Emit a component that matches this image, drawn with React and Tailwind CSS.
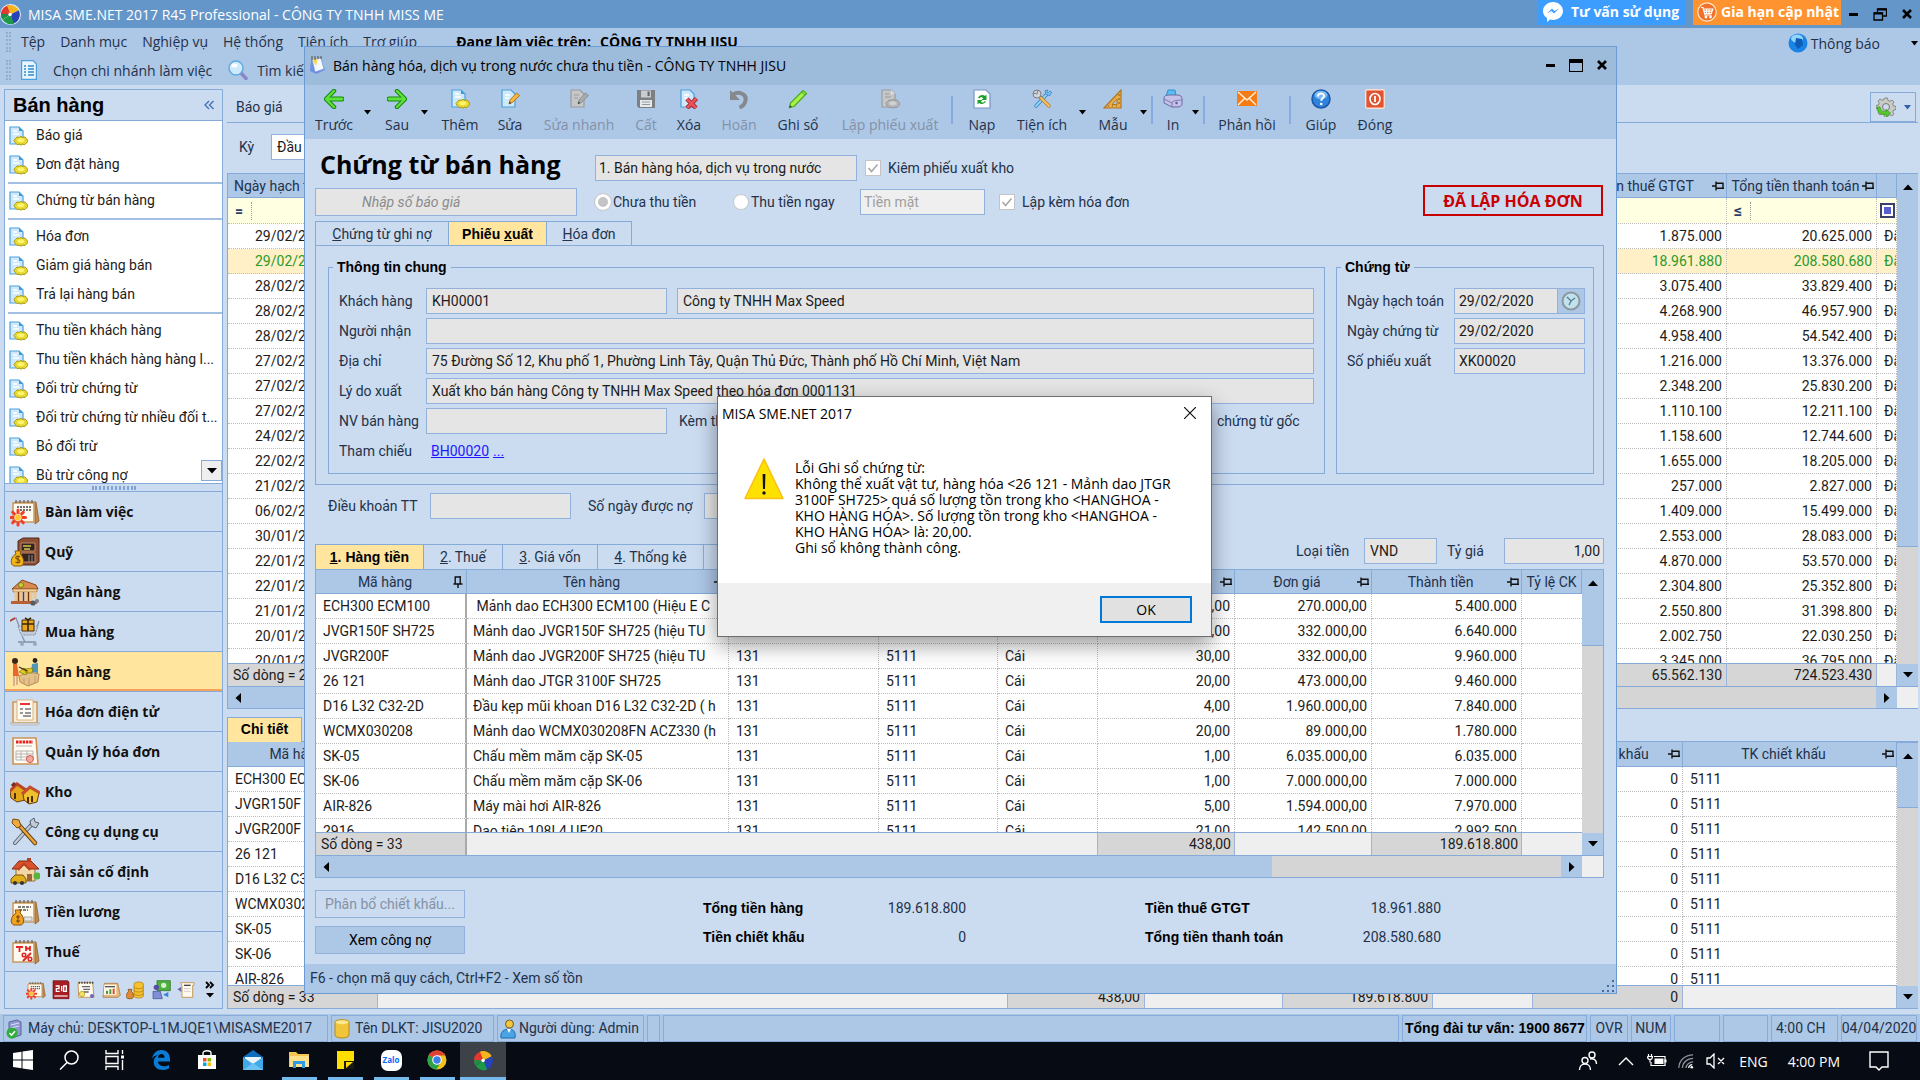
import React from "react";

const UI = "font-['Open_Sans','Noto_Sans',sans-serif]";
const GRID = "font-[Roboto,'Liberation_Sans',sans-serif]";

/* ---------- small glyphs ---------- */
const Tri = ({ dir = "down", className = "" }) => {
  const p = { down: "M0 2h10L5 7.5z", up: "M0 8h10L5 2.5z", left: "M8 0v10L2.500 5z", right: "M2 0v10L7.500 5z" };
  return (
    <svg viewBox="0 0 10 10" className={"h-[10px] w-[10px] shrink-0 fill-black " + className}>
      <path d={p[dir]} />
    </svg>
  );
};
const Pin = ({ up }) => (
  <svg viewBox="0 0 12 10" className={"h-[10px] w-[12px] shrink-0 " + (up ? "-rotate-90" : "")} fill="none" stroke="#111" strokeWidth="1.4">
    <path d="M0 5h4M4 0.500v9M4 2.200h7v5M4 7.200h8" />
  </svg>
);

const page = (fill = "#cfe8fb", stroke = "#4a9fdc") => (
  <path d="M2 1h9l4 4v13H2z" fill={fill} stroke={stroke} strokeWidth="1.200" />
);
const Doc = ({ gray, className = "h-5 w-5" }) => (
  <svg viewBox="0 0 20 20" className={"shrink-0 " + className}>
    {gray ? page("#c4c6c8", "#9a9c9e") : page()}
    <path d="M11 1v4h4" fill={gray ? "#e2e2e2" : "#3f9be0"} />
    <path d="M5 8h6M5 5h4" stroke={gray ? "#aaa" : "#fff"} strokeWidth="1.500" />
    <path
      d="M7.500 12.500l-1.500 2L7.500 17l1.500 1.500 2.500-.3 1.500 1 1.500-1 2.500.3 1.500-1.500 1.500-2-1.500-2.500-1.500-1.500-2.500.3-1.500-1-1.500 1-2.500-.3z"
      fill={gray ? "#b4b6b8" : "#e8d830"}
      stroke={gray ? "#929496" : "#a99a12"}
      strokeWidth="1"
    />
    <ellipse cx="12.800" cy="14.300" rx="3.400" ry="2" fill={gray ? "#d0d0d0" : "#fbf56e"} />
  </svg>
);
const DocEdit = ({ gray }) => (
  <svg viewBox="0 0 20 20" className="h-5 w-5">
    {gray ? page("#c4c6c8", "#9a9c9e") : page()}
    <path d="M5 6h5M5 9h4" stroke={gray ? "#aaa" : "#fff"} strokeWidth="1.500" />
    <path d="M9 15l1-4 6.500-7 3 2.500-7 7z" fill={gray ? "#a8aaac" : "#f8b63a"} stroke={gray ? "#8a8c8e" : "#a8701a"} strokeWidth="0.900" />
    <path d="M9 15l.6-2.400 1.600 1.500z" fill="#333" />
  </svg>
);
const DocDelete = () => (
  <svg viewBox="0 0 20 20" className="h-5 w-5">
    {page()}
    <path d="M5 6h5M5 9h4" stroke="#fff" strokeWidth="1.500" />
    <path d="M8 10l9 9M17.500 9.500l-9.500 9.500" stroke="#9c1f24" strokeWidth="4.400" />
    <path d="M8 10l9 9M17.500 9.500l-9.500 9.500" stroke="#e8545a" strokeWidth="2.800" />
  </svg>
);
const Arrow = ({ flip }) => (
  <svg viewBox="0 0 20 20" className={"h-5 w-5 " + (flip ? "-scale-x-100" : "")}>
    <path d="M10 2L2 10l8 8" fill="none" stroke="#168a0c" strokeWidth="4.500" strokeLinejoin="round" strokeLinecap="round" />
    <path d="M3 10h15" stroke="#168a0c" strokeWidth="5" strokeLinecap="round" />
    <path d="M10 2L2 10l8 8" fill="none" stroke="#5fe03c" strokeWidth="2.400" strokeLinejoin="round" strokeLinecap="round" />
    <path d="M3 10h15" stroke="#5fe03c" strokeWidth="2.800" strokeLinecap="round" />
  </svg>
);
const Save = () => (
  <svg viewBox="0 0 20 20" className="h-5 w-5">
    <path d="M1 1h18v18H3l-2-2z" fill="#7d8083" />
    <path d="M5 1.500h10v7H5z" fill="#c9cccf" />
    <path d="M11.500 2.500h2.200v4.500h-2.200z" fill="#66696c" />
    <path d="M4 11h12v7H4z" fill="#e6e8ea" />
    <path d="M6 13h8M6 15.500h8" stroke="#999" />
  </svg>
);
const Undo = () => (
  <svg viewBox="0 0 20 20" className="h-5 w-5">
    <path d="M3 6.500C9 1 18 5 16.500 11.500 16 15 13 17.500 10.500 18.500" fill="none" stroke="#85898d" strokeWidth="4" />
    <path d="M1 1v10h10z" fill="#85898d" />
  </svg>
);
const Pencil = () => (
  <svg viewBox="0 0 20 20" className="h-5 w-5">
    <path d="M1.500 18.500l1-4.500L15 1.500 18.500 4.500 6 17.500z" fill="#a5f04c" stroke="#4cab17" strokeWidth="1.200" />
    <path d="M13.500 3l3.500 3" stroke="#4cab17" />
    <path d="M1 19l1-3 2 2z" fill="#27600b" />
  </svg>
);
const Reload = () => (
  <svg viewBox="0 0 20 20" className="h-5 w-5">
    <path d="M2 1h12l4 4v14H2z" fill="#fff" stroke="#7b95c4" strokeWidth="1.200" />
    <path d="M6 9c1-3 5-4 7-2l1.500-1.500V11H9.500l1.800-1.800C10 8 8 8 7.500 9.500zM14 12c-1 3-5 4-7 2l-1.500 1.500V11h5l-1.800 1.700c1.300 1.200 3.300 1 3.800-.5z" fill="#18a12a" />
  </svg>
);
const Tools = () => (
  <svg viewBox="0 0 20 20" className="h-5 w-5">
    <path d="M4 17L15 5" stroke="#2f7fc4" strokeWidth="3.400" strokeLinecap="round" />
    <path d="M4 17L15 5" stroke="#8fd0f7" strokeWidth="2" strokeLinecap="round" />
    <path d="M13 1.500l1 4 4 1 1.500-3.500-1.500-1-2 2-1-1 1-2z" fill="#7cc3f2" stroke="#2f7fc4" strokeWidth=".7" />
    <path d="M8 8l9 9" stroke="#b57a1c" strokeWidth="3.400" strokeLinecap="round" />
    <path d="M9 9l8 8" stroke="#f7c267" strokeWidth="2" strokeLinecap="round" />
    <circle cx="5" cy="5" r="4" fill="#d4d7da" stroke="#7b7f83" />
    <path d="M1 4l4 1 1-4" fill="none" stroke="#7b7f83" />
  </svg>
);
const Ruler = () => (
  <svg viewBox="0 0 20 20" className="h-5 w-5">
    <path d="M1 19L18 1v18z" fill="#e8ad4a" stroke="#b3761c" strokeWidth="1.200" />
    <path d="M9 15.500l5-5.500v5.500z" fill="#adc7e6" stroke="#b3761c" />
    <path d="M16 5v2M16 9v2M16 13v2M5 17h1M9 17h1M13 17h1" stroke="#8a5a12" />
  </svg>
);
const Printer = () => (
  <svg viewBox="0 0 20 20" className="h-5 w-5">
    <path d="M3 7L5 1h7l1 6z" fill="#58bdf0" stroke="#2387bd" strokeWidth=".8" />
    <path d="M1 9c0-2 2-3 5-3h8c3 0 5 1 5 4v5c0 2-2 3-5 3H9l-8-4z" fill="#c4c1e8" stroke="#6d6aa6" />
    <path d="M1 10l8 4v4M9 14c0-3 10-3 10-3" fill="none" stroke="#7c79b5" />
    <circle cx="13.500" cy="14" r="1.200" fill="#5c5997" />
  </svg>
);
const Mail = () => (
  <svg viewBox="0 0 20 20" className="h-5 w-5">
    <path d="M0 2h20v15H0z" fill="#f57c14" />
    <path d="M1 3l9 8 9-8M1 16l6.500-6.500M19 16l-6.500-6.500" fill="none" stroke="#fff1dc" strokeWidth="1.400" />
  </svg>
);
const Help = () => (
  <svg viewBox="0 0 20 20" className="h-5 w-5">
    <circle cx="10" cy="10" r="9" fill="#2f83dc" stroke="#1a56a6" strokeWidth="1.500" />
    <ellipse cx="10" cy="6" rx="6.500" ry="4.200" fill="#7ab9f3" />
    <path d="M7 7.500c0-4 6-4 6-.5 0 2.200-2.800 2.200-2.800 4.700" fill="none" stroke="#fff" strokeWidth="2" />
    <circle cx="10.200" cy="15" r="1.300" fill="#fff" />
  </svg>
);
const Power = () => (
  <svg viewBox="0 0 20 20" className="h-5 w-5">
    <rect x=".7" y=".7" width="18.600" height="18.600" rx="1.500" fill="#e2532f" stroke="#f9ded4" strokeWidth="1.400" />
    <ellipse cx="10" cy="10" rx="5" ry="5.500" fill="none" stroke="#fff" strokeWidth="1.600" />
    <path d="M10 7v6" stroke="#fff" strokeWidth="1.800" />
  </svg>
);
const MisaLogo = ({ className, ring = "#e9eef5" }) => (
  <svg viewBox="0 0 24 24" className={"shrink-0 " + className}>
    <circle cx="12" cy="12" r="12" fill={ring} />
    <path d="M12 12L4 4.500A11 11 0 0 1 12 1z" fill="#e5352b" />
    <path d="M12 12L4.500 4A11 11 0 0 0 2 16z" fill="#e03a2e" />
    <path d="M12 12L8 2a11 11 0 0 1 13.500 5z" fill="#f7b51d" />
    <path d="M12 12l9.500-5A11 11 0 0 1 15 22.500z" fill="#2743b7" />
    <path d="M12 12l4 10.500A11 11 0 0 1 3 18z" fill="#1e9a47" />
    <path d="M12 12l-9.500 6A11 11 0 0 1 1.500 11z" fill="#1c8e49" />
    <circle cx="11.500" cy="12" r="2" fill="#fff" />
  </svg>
);

/* ---------- sidebar module icons ---------- */
const board = (
  <>
    <path d="M5 5h21l3 19-4 3V8H5z" fill="#c08a4c" stroke="#8e5d28" strokeWidth=".8" />
    <path d="M3 6h21v19H3z" fill="#fffaf0" stroke="#c99a5c" strokeWidth="1.500" />
    <path d="M6 6V3M10 6V3M14 6V3M18 6V3M22 6V3" stroke="#555" />
  </>
);
const moduleArt = {
  desk: (
    <>
      {board}
      <path d="M7 10h14M10 13h11" stroke="#444" strokeWidth="1.500" strokeDasharray="2 1" />
      <path d="M8 13v15M.5 20.500h15M2.700 15.200l10.600 10.600M13.300 15.200L2.700 25.800" stroke="#f0402a" strokeWidth="3" strokeLinecap="round" />
      <circle cx="8" cy="20.500" r="3.400" fill="#ffc62e" stroke="#fff" strokeWidth=".6" />
    </>
  ),
  safe: (
    <>
      <path d="M8 4l5-3h16v24l-4 3H8z" fill="#8c4f35" stroke="#57291a" />
      <path d="M11 6h14v8H11zM11 16h14v9H11z" fill="#33241f" stroke="#c28a63" />
      <path d="M13 9h8M14 12h6" stroke="#d7c44a" strokeWidth="1.500" />
      <path d="M19 18v7M22 18v7" stroke="#8b8b8b" />
      <path d="M5 14h6l-1 3c4 3 5 11 1 12H4C0 28 0 20 6 17z" fill="#f3b51c" stroke="#8c5c09" />
      <path d="M10 20c-2-2-5-.5-4 1.200 1 1.300 4 1 4 3 0 1.800-3 2-4.500.6M8 18.500v8" fill="none" stroke="#7a4c06" strokeWidth="1.100" />
    </>
  ),
  bank: (
    <>
      <path d="M2 12L12 3l14 5 2 4z" fill="#d98a4f" stroke="#8a451d" />
      <path d="M3 12h24v3H3z" fill="#f1cf98" stroke="#a46a35" strokeWidth=".7" />
      <path d="M6 15v9M11 15v9M16 15v9M21 15v9M25 15v7" stroke="#ecc68e" strokeWidth="3" />
      <path d="M8.500 15v9M13.500 15v9M18.500 15v9" stroke="#6d3716" strokeWidth="1.400" />
      <path d="M1 24h26v3H1z" fill="#b85f34" />
      <circle cx="11" cy="8" r="2.500" fill="#c7d52a" stroke="#4b5a10" strokeWidth=".6" />
      <circle cx="23" cy="26" r="2.600" fill="#555c66" />
      <circle cx="27" cy="24" r="2" fill="#7b828c" />
    </>
  ),
  cart: (
    <>
      <path d="M1 3l5-2 5 13h15l3-10" fill="none" stroke="#8493a8" strokeWidth="1.300" />
      <path d="M8 9l3 9h14l3-9z" fill="#c2ccda" stroke="#8493a8" strokeDasharray="2 1" />
      <path d="M12 3h12v11H12z" fill="#eaa61e" stroke="#4a3208" />
      <path d="M18 3v11M12 7h12M15 1l3 2 3-2" fill="none" stroke="#3a2606" strokeWidth="1.600" />
      <path d="M12 19l3 6h11M8 25h17" fill="none" stroke="#8493a8" strokeWidth="1.300" />
      <circle cx="12" cy="27" r="2" fill="#9aa8bb" />
      <circle cx="25" cy="27" r="2" fill="#9aa8bb" />
      <path d="M0 4l5-3" stroke="#b23b2c" strokeWidth="1.800" />
    </>
  ),
  sell: (
    <>
      <circle cx="5" cy="4" r="3" fill="#3a2316" />
      <path d="M3 7l4 0 2 12H3z" fill="#e9672a" />
      <path d="M4 19v10M7 19v9" stroke="#d9a184" strokeWidth="1.600" />
      <circle cx="25" cy="3.500" r="2.400" fill="#2f2018" />
      <path d="M22 7l6-1v10l-7-1z" fill="#4b97bd" />
      <path d="M9 19l10-4 10 2-1 8-10 4-8-4z" fill="#e4c08b" stroke="#b98c58" />
      <path d="M14 21v6M19 21v7M25 19v7" stroke="#c79a66" />
      <path d="M9 15l5-4 4 3-2 4zM15 12l8-1-1 5h-6z" fill="#e9c61d" stroke="#6c7b15" strokeWidth=".7" />
      <path d="M9 10l8 4" stroke="#3a2316" strokeWidth="1.200" />
    </>
  ),
  einv: (
    <>
      <path d="M3 5h24v21H3z" fill="#f6ead6" stroke="#cc9c5c" strokeWidth="1.600" />
      <path d="M7 3h16v20H7z" fill="#fffdf8" stroke="#d9b27c" />
      <path d="M10 7h10" stroke="#e33" strokeWidth="2" />
      <path d="M10 12h3M15 12h6M10 16h3M15 16h6M13 19h8" stroke="#777" strokeWidth="1.600" />
      <path d="M0 26h30l-2 2H2z" fill="#d7dade" stroke="#a7a7a7" strokeWidth=".6" />
    </>
  ),
  inv: (
    <>
      <path d="M3 1h23l2 26H3z" fill="#fffaf2" stroke="#cb9455" strokeWidth="1.600" />
      <path d="M6 5h17" stroke="#e32222" strokeWidth="3" strokeDasharray="2.500 .8" />
      <path d="M6 9h16M6 14h17v9H6zM6 17h17M6 20h17M11 14v9M17 14v9" fill="none" stroke="#b5b5b5" />
      <circle cx="20" cy="22" r="3.500" fill="#f2a8a0" stroke="#d6584b" />
    </>
  ),
  ware: (
    <>
      <path d="M0 14L7 7l9 6-1 10-8 2-6-4z" fill="#e2a81a" stroke="#6d3a0c" />
      <path d="M0 14L7 7l9 6" fill="none" stroke="#b9442a" strokeWidth="3" />
      <path d="M13 17l7-6 9 5-2 9-8 2-5-4z" fill="#eec12d" stroke="#6d3a0c" />
      <path d="M12 17l8-7 10 6" fill="none" stroke="#c24e30" strokeWidth="3" />
      <path d="M5 16v6M18 20v6M22 19v6" stroke="#4c2d08" strokeWidth="2" />
      <path d="M2 9l3-3" stroke="#7a2b19" strokeWidth="3" />
    </>
  ),
  tool: (
    <>
      <path d="M5 26L22 7" stroke="#51606f" strokeWidth="4" strokeLinecap="round" />
      <path d="M5 26L22 7" stroke="#c3ccd6" strokeWidth="2.200" strokeLinecap="round" />
      <path d="M8 7l17 19" stroke="#5d3f1c" strokeWidth="4.400" strokeLinecap="round" />
      <path d="M9 8l16 18" stroke="#eda535" strokeWidth="2.600" strokeLinecap="round" />
      <path d="M3 2l6 1 2 6-4 2-5-5z" fill="#edab3c" stroke="#7c4d12" />
      <path d="M21 9l-1-5 4-3 1 4 4 1-3 5z" fill="#c3ccd6" stroke="#51606f" />
    </>
  ),
  house: (
    <>
      <path d="M6 11h19v13H6z" fill="#f2d7a4" stroke="#9d6f38" />
      <path d="M2 12L9 4h12l8 8z" fill="#d9522d" stroke="#8b2b14" />
      <path d="M8 13l6-6 6 6" fill="#f4dcae" stroke="#b7401f" strokeWidth="2" />
      <path d="M17 4V1h4v4" fill="#b7401f" />
      <path d="M17 17h5v7h-5z" fill="#9d6436" />
      <circle cx="27" cy="19" r="3.500" fill="#55b53c" />
      <path d="M1 22l4-4h8l3 4v4H1z" fill="#e2ad19" stroke="#7c5608" />
      <circle cx="5" cy="26" r="2" fill="#333" />
      <circle cx="12" cy="26" r="2" fill="#333" />
    </>
  ),
  wage: (
    <>
      {board}
      <path d="M8 10h13M9 13h9" stroke="#555" strokeWidth="1.400" strokeDasharray="3 1" />
      <path d="M14 20h8v4h-8z" fill="#e3e3e3" stroke="#aaa" />
      <path d="M5 13h6l-1 3c4 3 5 11 1 12H4C0 27 0 20 6 16z" fill="#f0a321" stroke="#8c5209" />
      <path d="M8 18v8M6 20h4M6 24h4" stroke="#70410a" />
    </>
  ),
  tax: (
    <>
      {board}
      <path d="M6 10h7M9.500 10v5M16 9v5M16 11.500h4M20 9v5" stroke="#e42424" strokeWidth="1.800" />
      <path d="M13 24l8-8" stroke="#e42424" strokeWidth="2" />
      <circle cx="14" cy="18" r="1.800" fill="none" stroke="#e42424" strokeWidth="1.500" />
      <circle cx="20" cy="22" r="1.800" fill="none" stroke="#e42424" strokeWidth="1.500" />
    </>
  ),
  book: (
    <>
      <path d="M3 1h22l2 2v25H3z" fill="#a81d22" stroke="#651014" />
      <path d="M7 9h5v4H8v4h5M16 9v8M19 9h4v8h-4z" stroke="#fff" strokeWidth="2" fill="none" />
      <path d="M5 24h20" stroke="#f6dede" strokeWidth="2" />
    </>
  ),
  list: (
    <>
      <path d="M3 4h22l2 22H4z" fill="#fffaf0" stroke="#c99a5c" strokeWidth="1.500" />
      <path d="M4 4h22" stroke="#444" strokeWidth="3" strokeDasharray="2 2" />
      <path d="M9 10h12M11 14h10M11 18h8" stroke="#666" strokeWidth="2" />
      <circle cx="9" cy="21" r="4" fill="#f5e26c" stroke="#a99a12" />
      <circle cx="24" cy="24" r="3" fill="#6a6ab8" />
    </>
  ),
  chart: (
    <>
      <path d="M5 5h20l4 18-4 3H3z" fill="#e7b878" stroke="#a06c32" />
      <path d="M5 7h18v15H4z" fill="#fffaf0" />
      <path d="M6 10h15" stroke="#555" strokeWidth="2" />
      <path d="M9 21v-5M14 21v-7" stroke="#4d9a3c" strokeWidth="3" />
      <path d="M19 21v-8" stroke="#d94c2a" strokeWidth="3" />
    </>
  ),
  coins: (
    <>
      <path d="M12 6c0-4 14-4 14 0v18c0 4-14 4-14 0z" fill="#f3c22e" stroke="#a8760a" />
      <path d="M12 10c0 4 14 4 14 0M12 15c0 4 14 4 14 0M12 20c0 4 14 4 14 0" fill="none" stroke="#a8760a" />
      <path d="M3 14h6l-1 3c4 3 4 10 1 11H3c-4-1-3-8 1-11z" fill="#e08a35" stroke="#7d420c" />
    </>
  ),
  transfer: (
    <>
      <path d="M9 1h20v15H9z" fill="#4caf3e" stroke="#22691a" />
      <circle cx="19" cy="8" r="4" fill="#d6efcb" />
      <circle cx="8" cy="11" r="4" fill="#5b4ba8" />
      <path d="M3 17h11l3 11H3z" fill="#7e8fd8" stroke="#3c4b91" />
      <path d="M18 22l8-4v8z" fill="#3887da" />
    </>
  ),
  scroll: (
    <>
      <path d="M7 4h20v4h-2v18H9V9z" fill="#fffaf0" stroke="#c99a5c" strokeWidth="1.500" />
      <path d="M12 8h10" stroke="#444" strokeWidth="2" />
      <path d="M12 13h10M12 17h10" stroke="#bbb" />
      <path d="M8 10l-6 4 6 4z" fill="#6a6aa8" />
    </>
  ),
};
const ModuleIcon = ({ kind, className }) => (
  <svg viewBox="0 0 30 30" className={"shrink-0 " + className}>{moduleArt[kind]}</svg>
);

/* ---------- data ---------- */
const links = [
  ["Báo giá", "Đơn đặt hàng"],
  ["Chứng từ bán hàng"],
  ["Hóa đơn", "Giảm giá hàng bán", "Trả lại hàng bán"],
  ["Thu tiền khách hàng", "Thu tiền khách hàng hàng l...", "Đối trừ chứng từ", "Đối trừ chứng từ nhiều đối t...", "Bỏ đối trừ", "Bù trừ công nợ"],
];
const modules = [
  ["desk", "Bàn làm việc"], ["safe", "Quỹ"], ["bank", "Ngân hàng"], ["cart", "Mua hàng"], ["sell", "Bán hàng"],
  ["einv", "Hóa đơn điện tử"], ["inv", "Quản lý hóa đơn"], ["ware", "Kho"], ["tool", "Công cụ dụng cụ"],
  ["house", "Tài sản cố định"], ["wage", "Tiền lương"], ["tax", "Thuế"],
];
const vouchers = [
  ["29/02/2020", "1.875.000", "20.625.000"], ["29/02/2020", "18.961.880", "208.580.680"], ["28/02/2020", "3.075.400", "33.829.400"],
  ["28/02/2020", "4.268.900", "46.957.900"], ["28/02/2020", "4.958.400", "54.542.400"], ["27/02/2020", "1.216.000", "13.376.000"],
  ["27/02/2020", "2.348.200", "25.830.200"], ["27/02/2020", "1.110.100", "12.211.100"], ["24/02/2020", "1.158.600", "12.744.600"],
  ["22/02/2020", "1.655.000", "18.205.000"], ["21/02/2020", "257.000", "2.827.000"], ["06/02/2020", "1.409.000", "15.499.000"],
  ["30/01/2020", "2.553.000", "28.083.000"], ["22/01/2020", "4.870.000", "53.570.000"], ["22/01/2020", "2.304.800", "25.352.800"],
  ["21/01/2020", "2.550.800", "31.398.800"], ["20/01/2020", "2.002.750", "22.030.250"], ["20/01/2020", "3.345.000", "36.795.000"],
];
const items = [
  ["ECH300 ECM100", "\u00a0Mảnh dao ECH300 ECM100 (Hiệu E C", "20,00", "270.000,00", "5.400.000"],
  ["JVGR150F SH725", "Mảnh dao JVGR150F SH725 (hiệu TU", "20,00", "332.000,00", "6.640.000"],
  ["JVGR200F", "Mảnh dao JVGR200F SH725 (hiệu TU", "30,00", "332.000,00", "9.960.000"],
  ["26 121", "Mảnh dao JTGR 3100F SH725", "20,00", "473.000,00", "9.460.000"],
  ["D16 L32 C32-2D", "Đầu kẹp mũi khoan D16 L32 C32-2D ( h", "4,00", "1.960.000,00", "7.840.000"],
  ["WCMX030208", "Mảnh dao WCMX030208FN ACZ330 (h", "20,00", "89.000,00", "1.780.000"],
  ["SK-05", "Chấu mềm măm cặp SK-05", "1,00", "6.035.000,00", "6.035.000"],
  ["SK-06", "Chấu mềm măm cặp SK-06", "1,00", "7.000.000,00", "7.000.000"],
  ["AIR-826", "Máy mài hơi AIR-826", "5,00", "1.594.000,00", "7.970.000"],
  ["2916", "Dao tiện 108L4 UF20", "21,00", "142.500,00", "2.992.500"],
];

/* ---------- grid parts ---------- */
const TABLE = "w-full table-fixed border-separate border-spacing-0 text-[14px] leading-[18px] text-[#1c1c1c] " + GRID;
const TH = "h-[25px] border-r border-b border-[#86abd9] bg-[#adc7e6] p-0 font-normal text-[#23324a]";
const TD = "h-[25px] overflow-hidden whitespace-nowrap border-r border-b border-dotted border-[#bdbdbd] px-[7px] py-0";
const NUM = TD + " text-right !px-[4px]";
const FT = "h-[22px] overflow-hidden whitespace-nowrap border-r border-[#9bb6da] px-[6px] py-0";

const Head = ({ children, pin, up }) => (
  <div className="flex items-center overflow-hidden whitespace-nowrap px-[2px]">
    <span className="flex-1 text-center">{children}</span>
    {pin && <Pin up={up} />}
  </div>
);
const Cols = ({ widths }) => (
  <colgroup>{widths.map((w, i) => <col key={i} className={w} />)}</colgroup>
);
const VScroll = ({ thumb }) => (
  <div className="flex w-[21px] shrink-0 flex-col bg-[#d5d5d5]">
    <div className="flex h-[26px] items-center justify-center border-t border-[#86abd9] bg-[#adc7e6]"><Tri dir="up" /></div>
    <div className={"border-b border-[#86abd9] bg-[#adc7e6] " + thumb} />
    <div className="flex-1" />
    <div className="flex h-[22px] items-center justify-center bg-[#adc7e6]"><Tri /></div>
  </div>
);
const HScroll = ({ thumb }) => (
  <div className="flex h-[23px] shrink-0 border-y border-[#86abd9] bg-[#d5d5d5]">
    <div className="flex w-[20px] items-center justify-center bg-[#adc7e6]"><Tri dir="left" /></div>
    <div className={"bg-[#adc7e6] " + thumb} />
    <div className="flex-1" />
    <div className="flex w-[21px] items-center justify-center bg-[#adc7e6]"><Tri dir="right" /></div>
    <div className="w-[21px] bg-[#efefef]" />
  </div>
);

function VoucherGrid() {
  const w = ["w-[150px]", "", "w-[150px]", "w-[150px]", "w-[20px]"];
  return (
    <section className="flex h-[536px] flex-col border-l border-[#86abd9]">
      <div className="flex min-h-0 flex-1">
        <div className="flex min-w-0 flex-1 flex-col">
          <div className="min-h-0 flex-1 overflow-hidden bg-white">
            <table className={TABLE}>
              <Cols widths={w} />
              <thead>
                <tr>
                  {["Ngày hạch toán", "", "Tiền thuế GTGT", "Tổng tiền thanh toán", ""].map((h, i) => (
                    <th key={i} scope="col" className={TH + " border-t"}>
                      {i === 0 ? <div className="pl-[6px] text-left">{h}</div> : <Head pin={i > 1 && i < 4}>{h}</Head>}
                    </th>
                  ))}
                </tr>
                <tr className="text-[#2d3f6b]">
                  <td className={TD + " !h-[26px] bg-[#ffffe1]"}><span className="inline-block w-[17px] border-r border-dotted border-[#999] font-bold">=</span></td>
                  <td className={TD + " bg-[#ffffe1]"} />
                  <td className={TD + " bg-[#ffffe1]"} />
                  <td className={TD + " bg-[#ffffe1]"}><span className="inline-block w-[17px] border-r border-dotted border-[#999] text-[16px] font-bold">≤</span></td>
                  <td className={TD + " bg-[#ffffe1] !px-[3px]"}>
                    <span className="flex h-[15px] w-[15px] items-center justify-center border-2 border-[#3b3f6b] bg-white"><span className="h-[7px] w-[7px] bg-[#5a5fd0]" /></span>
                  </td>
                </tr>
              </thead>
              <tbody>
                {vouchers.map((r, i) => (
                  <tr key={i} className={i === 1 ? "bg-[#fff0c8] text-[#2a9a2a]" : ""}>
                    <td className={TD + " !pl-[27px]"}>{r[0]}</td>
                    <td className={TD} />
                    <td className={NUM}>{r[1]}</td>
                    <td className={NUM}>{r[2]}</td>
                    <td className={TD + " !pr-0"}>Đã</td>
                  </tr>
                ))}
              </tbody>
            </table>
          </div>
          <table className={TABLE + " border-t border-[#86abd9]"}>
            <Cols widths={w} />
            <tbody>
              <tr>
                <td className={FT + " bg-[#d6d6d6] !px-[5px]"}>Số dòng = 29</td>
                <td className={FT + " bg-[#efefef]"} />
                <td className={FT + " bg-[#d6d6d6] text-right !px-[4px]"}>65.562.130</td>
                <td className={FT + " bg-[#d6d6d6] text-right !px-[4px]"}>724.523.430</td>
                <td className={FT + " bg-[#efefef]"} />
              </tr>
            </tbody>
          </table>
        </div>
        <VScroll thumb="h-[348px]" />
      </div>
      <HScroll thumb="w-1/2" />
    </section>
  );
}

function DetailGrid() {
  const w = ["w-[150px]", "", "w-[137px]", "w-[138px]", "w-[150px]", "w-[100px]", "w-[150px]", "w-[214px]"];
  const heads = ["Mã hàng", "", "", "", "", "", "Tiền chiết khấu", "TK chiết khấu"];
  const foot = ["Số dòng = 33", "", "438,00", "", "189.618.800", "", "0", ""];
  return (
    <section className="flex min-h-0 flex-1 border-b border-l border-[#86abd9]">
      <div className="flex min-w-0 flex-1 flex-col">
        <div className="min-h-0 flex-1 overflow-hidden bg-white">
          <table className={TABLE}>
            <Cols widths={w} />
            <thead>
              <tr>{heads.map((h, i) => <th key={i} scope="col" className={TH}><Head pin={h !== ""}>{h}</Head></th>)}</tr>
            </thead>
            <tbody>
              {items.slice(0, 9).map((r) => (
                <tr key={r[0]}>
                  <td className={TD}>{r[0]}</td>
                  <td className={TD} />
                  <td className={TD} />
                  <td className={TD} />
                  <td className={TD} />
                  <td className={TD} />
                  <td className={NUM}>0</td>
                  <td className={TD}>5111</td>
                </tr>
              ))}
            </tbody>
          </table>
        </div>
        <table className={TABLE + " border-t border-[#86abd9]"}>
          <Cols widths={w} />
          <tbody>
            <tr>{foot.map((f, i) => <td key={i} className={FT + (f ? " bg-[#d6d6d6]" : " bg-[#efefef]") + (i ? " text-right !px-[4px]" : " !px-[5px]")}>{f}</td>)}</tr>
          </tbody>
        </table>
      </div>
      <VScroll thumb="h-[40px]" />
    </section>
  );
}

function ItemGrid() {
  const w = ["w-[151px]", "w-[262px]", "w-[150px]", "w-[119px]", "w-[100px]", "", "w-[137px]", "w-[150px]", "w-[60px]"];
  const heads = ["Mã hàng", "Tên hàng", "TK công nợ", "TK doanh thu", "ĐVT", "Số lượng", "Đơn giá", "Thành tiền", "Tỷ lệ CK"];
  return (
    <section className="flex min-h-0 flex-1 flex-col border-x border-[#86abd9]">
      <div className="flex min-h-0 flex-1">
        <div className="flex min-w-0 flex-1 flex-col">
          <div className="min-h-0 flex-1 overflow-hidden bg-white">
            <table className={TABLE}>
              <Cols widths={w} />
              <thead>
                <tr>
                  {heads.map((h, i) => (
                    <th key={h} scope="col" className={TH + " border-t"}><Head pin={i < 8} up={i === 0}>{h}</Head></th>
                  ))}
                </tr>
              </thead>
              <tbody>
                {items.map((r) => (
                  <tr key={r[0]}>
                    <td className={TD + " border-r-2 [border-right-color:#a9a9a9] [border-right-style:solid]"}>{r[0]}</td>
                    <td className={TD + " !pl-[6px]"}>{r[1]}</td>
                    <td className={TD}>131</td>
                    <td className={TD}>5111</td>
                    <td className={TD}>Cái</td>
                    <td className={NUM + " !px-[3px]"}>{r[2]}</td>
                    <td className={NUM + " !px-[3px]"}>{r[3]}</td>
                    <td className={NUM + " !px-[3px]"}>{r[4]}</td>
                    <td className={TD + " border-r-0"} />
                  </tr>
                ))}
              </tbody>
            </table>
          </div>
          <table className={TABLE + " border-t border-[#86abd9]"}>
            <Cols widths={w} />
            <tbody>
              <tr>
                <td className={FT + " border-r-2 !border-[#a9a9a9] bg-[#d6d6d6] !px-[5px]"}>Số dòng = 33</td>
                <td colSpan={4} className={FT + " bg-[#efefef]"} />
                <td className={FT + " bg-[#d6d6d6] text-right !px-[3px]"}>438,00</td>
                <td className={FT + " bg-[#efefef]"} />
                <td className={FT + " bg-[#d6d6d6] text-right !px-[3px]"}>189.618.800</td>
                <td className={FT + " border-r-0 bg-[#efefef]"} />
              </tr>
            </tbody>
          </table>
        </div>
        <VScroll thumb="h-[51px]" />
      </div>
      <HScroll thumb="w-[72.700%]" />
    </section>
  );
}

/* ---------- form parts ---------- */
const BOX = "h-[26px] min-w-0 rounded-none border border-[#92b2dc] bg-[#e5e5e5] px-[5px] text-[14px] text-[#1c1c1c] outline-none " + GRID;
const BOLD = "font-['Liberation_Sans',sans-serif] font-bold text-black";

const FormRow = ({ id, label, children }) => (
  <div className="mb-1 flex h-[26px] items-center">
    <label htmlFor={id} className="w-[87px] shrink-0">{label}</label>
    {children}
  </div>
);
const Tick = ({ label }) => (
  <label className="flex items-center gap-[7px]">
    <span className="relative h-4 w-4">
      <input type="checkbox" defaultChecked disabled className="block h-4 w-4 appearance-none border border-[#c4c4c4] bg-white" />
      <svg viewBox="0 0 16 16" className="pointer-events-none absolute inset-0 h-4 w-4"><path d="M3.500 8l3 3.500 6-7" fill="none" stroke="#a8a8a8" strokeWidth="1.600" /></svg>
    </span>
    {label}
  </label>
);
const Radio = ({ label, checked, className }) => (
  <label className={"flex items-center gap-[2px] " + className}>
    <input
      type="radio" name="payment" defaultChecked={checked} disabled
      className="h-4 w-4 appearance-none rounded-full border border-[#c8c8c8] bg-white checked:border-[3px] checked:border-white checked:bg-[#c4c4c4] checked:outline-1 checked:outline-[#c8c8c8]"
    />
    {label}
  </label>
);
const Tab = ({ active, mark, children, before = "", className }) => (
  <button
    type="button"
    className={"h-[25px] whitespace-nowrap border-t border-r border-[#86abd9] text-[14px] first:border-l " + className + (active ? " bg-[#ffe59d] " + BOLD : " text-[#23324a] " + GRID)}
  >
    {before}<u>{mark}</u>{children}
  </button>
);

const toolbar = [
  ["w-[48px]", "Trước", <Arrow />, "w-[18px]"], ["w-[42px]", "Sau", <Arrow flip />, "w-[12px]"],
  ["w-[60px]", "Thêm", <Doc />], ["w-[40px]", "Sửa", <DocEdit />], ["w-[98px]", "Sửa nhanh", <DocEdit gray />, 0, 1],
  ["w-[36px]", "Cất", <Save />, 0, 1], ["w-[50px]", "Xóa", <DocDelete />], ["w-[50px]", "Hoãn", <Undo />, 0, 1],
  ["w-[68px]", "Ghi sổ", <Pencil />], ["w-[116px]", "Lập phiếu xuất", <Doc gray />, 0, 1], null,
  ["w-[52px]", "Nạp", <Reload />], ["w-[68px]", "Tiện ích", <Tools />, "w-[12px]"], ["w-[50px]", "Mẫu", <Ruler />, "w-[10px]"], null,
  ["w-[34px]", "In", <Printer />, "w-[10px]"], null, ["w-[78px]", "Phản hồi", <Mail />], null,
  ["w-[54px]", "Giúp", <Help />], ["w-[54px]", "Đóng", <Power />],
];

function InvoiceWindow() {
  return (
    <section aria-label="Chứng từ bán hàng" className={"absolute top-[46px] right-[303px] bottom-[86px] left-[304px] flex flex-col border border-[#6b9bd0] bg-[#cbdbf0] text-[14px] text-[#23324a] " + GRID}>
      <header className={"flex h-[38px] shrink-0 items-center bg-[#9dbbdb] pr-[9px] pb-[2px] pl-1 " + UI}>
        <svg viewBox="0 0 18 20" className="h-5 w-[18px]">
          <path d="M2 5l9-2 5 12-9 4-6-3z" fill="#6f8fe6" />
          <path d="M3 4l9-1 3 11-9 3z" fill="#f4f8ff" stroke="#7d9be0" strokeWidth=".8" />
          <path d="M3 4l6-.5L7 11z" fill="#f7d857" />
          <path d="M3 5V1M6 5V1M9 4V1M12 4V1" stroke="#4c4c4c" />
        </svg>
        <h2 className="ml-[6px] flex-1 text-black">Bán hàng hóa, dịch vụ trong nước chưa thu tiền - CÔNG TY TNHH JISU</h2>
        <div className="flex items-center gap-[14px]">
          <button type="button" aria-label="Thu nhỏ" className="flex h-4 w-[9px] items-center"><span className="h-[3px] w-full bg-black" /></button>
          <button type="button" aria-label="Phóng to" className="h-[13px] w-[14px] border border-t-4 border-black" />
          <button type="button" aria-label="Đóng cửa sổ">
            <svg viewBox="0 0 10 10" className="h-[10px] w-[10px]"><path d="M1 1l8 8M9 1L1 9" stroke="#000" strokeWidth="2.600" /></svg>
          </button>
        </div>
      </header>

      <div role="toolbar" className={"flex h-[54px] shrink-0 bg-[#adc7e6] pl-[5px] " + UI}>
        {toolbar.map((t, i) =>
          t === null ? (
            <div key={i} className="flex w-2 justify-center pt-[11px]"><span className="h-7 w-[2px] bg-[#86abdf]" /></div>
          ) : (
            <React.Fragment key={i}>
              <button type="button" disabled={!!t[4]} className={"flex flex-col items-center whitespace-nowrap pt-1 " + t[0] + (t[4] ? " text-[#8492a6]" : "")}>
                {t[2]}
                <span className="mt-[6px] leading-5">{t[1]}</span>
              </button>
              {t[3] ? <span className={"flex items-center justify-center " + t[3]}><svg viewBox="0 0 7 5" className="h-[5px] w-[7px] fill-black"><path d="M0 0h7L3.500 4.500z" /></svg></span> : null}
            </React.Fragment>
          )
        )}
      </div>

      <div className="flex min-h-0 flex-1 flex-col pr-[12px] pl-[10px]">
        <div className="flex justify-between pt-4">
          <div className="flex flex-col gap-[7px]">
            <div className="flex h-[26px] items-center">
              <h1 className={"w-[280px] pb-2 pl-[5px] text-[25px] leading-none font-bold text-black " + UI}>Chứng từ bán hàng</h1>
              <select aria-label="Loại chứng từ" className={BOX + " mr-[8px] w-[262px] appearance-none !px-[3px]"}><option>1. Bán hàng hóa, dịch vụ trong nước</option></select>
              <Tick label="Kiêm phiếu xuất kho" />
            </div>
            <div className="flex h-[28px] items-center">
              <input aria-label="Số báo giá" placeholder="Nhập số báo giá" className={BOX + " !h-[28px] w-[262px] !pl-[46px] italic placeholder:text-[#8b8b8b]"} />
              <Radio label="Chưa thu tiền" checked className="ml-[18px] w-[138px]" />
              <Radio label="Thu tiền ngay" className="w-[127px]" />
              <select aria-label="Hình thức thu" disabled className={BOX + " mr-[14px] w-[125px] appearance-none !bg-[#efefef] !px-[3px] !text-[#a0a0a0] opacity-100"}><option>Tiền mặt</option></select>
              <Tick label="Lập kèm hóa đơn" />
            </div>
          </div>
          <div className={"mr-[1px] flex h-[31px] w-[180px] items-center justify-center self-end border-2 border-[#c80000] text-[16px] font-bold text-[#c80000] " + UI}>ĐÃ LẬP HÓA ĐƠN</div>
        </div>

        <div className="mt-[5px] flex">
          <Tab mark="C" className="w-[134px]">hứng từ ghi nợ</Tab>
          <Tab active before="Phiếu " mark="x" className="w-[98px]">uất</Tab>
          <Tab mark="H" className="w-[85px]">óa đơn</Tab>
        </div>
        <div className="-mt-px flex gap-[11px] border border-[#86abd9] pt-[11px] pr-[9px] pb-[10px] pl-[12px]">
          <fieldset className="min-w-0 flex-1 border border-[#86abd9] px-[10px] pb-[9px]">
            <legend className={"-ml-[6px] h-5 px-1 " + BOLD}>Thông tin chung</legend>
            <div className="pt-[11px]">
              <FormRow id="kh" label="Khách hàng">
                <input id="kh" readOnly value="KH00001" className={BOX + " mr-[10px] w-[241px]"} />
                <input aria-label="Tên khách hàng" readOnly value="Công ty TNHH Max Speed" className={BOX + " flex-1"} />
              </FormRow>
              <FormRow id="nn" label="Người nhận"><input id="nn" readOnly className={BOX + " flex-1"} /></FormRow>
              <FormRow id="dc" label="Địa chỉ"><input id="dc" readOnly value="75 Đường Số 12, Khu phố 1, Phường Linh Tây, Quận Thủ Đức, Thành phố Hồ Chí Minh, Việt Nam" className={BOX + " flex-1"} /></FormRow>
              <FormRow id="ld" label="Lý do xuất"><input id="ld" readOnly value="Xuất kho bán hàng Công ty TNHH Max Speed theo hóa đơn 0001131" className={BOX + " flex-1"} /></FormRow>
              <FormRow id="nv" label="NV bán hàng">
                <input id="nv" readOnly className={BOX + " w-[241px]"} />
                <label htmlFor="kt" className="w-[76px] pl-[12px]">Kèm theo</label>
                <input id="kt" readOnly className={BOX + " flex-1"} />
                <span className="w-[107px] pl-[10px]">chứng từ gốc</span>
              </FormRow>
              <div className="flex h-[26px] items-center">
                <span className="w-[92px]">Tham chiếu</span>
                <a href="#bh00020" className="text-[#1a1aff] underline">BH00020</a>
                <a href="#more" className="ml-1 text-[#1a1aff] underline">...</a>
              </div>
            </div>
          </fieldset>
          <fieldset className="w-[258px] min-w-0 shrink-0 border border-[#86abd9] pr-[8px] pl-[10px]">
            <legend className={"-ml-[6px] h-5 px-1 " + BOLD}>Chứng từ</legend>
            <div className="pt-[11px]">
              {[["Ngày hạch toán", "29/02/2020"], ["Ngày chứng từ", "29/02/2020"], ["Số phiếu xuất", "XK00020"]].map(([l, v], i) => (
                <div key={l} className="mb-1 flex h-[26px] items-center">
                  <label htmlFor={"ct" + i} className="w-[107px] shrink-0">{l}</label>
                  <input id={"ct" + i} readOnly value={v} className={BOX + " w-0 flex-1 !px-[4px]"} />
                  {i === 0 && (
                    <button type="button" aria-label="Chọn ngày" className="flex h-[26px] w-[27px] shrink-0 items-center justify-center border border-l-0 border-[#92b2dc] bg-[#adc7e6]">
                      <svg viewBox="0 0 20 20" className="h-5 w-5"><circle cx="10" cy="10" r="8.500" fill="#bfe3ee" stroke="#8d979c" strokeWidth="2" /><path d="M6 6l4 4 4-3M10 10l-2 4" fill="none" stroke="#5c7a84" strokeWidth="1.300" /></svg>
                    </button>
                  )}
                </div>
              ))}
            </div>
          </fieldset>
        </div>

        <div className="mt-[8px] flex h-[26px] items-center pl-[13px]">
          <label htmlFor="dk" className="w-[102px]">Điều khoản TT</label>
          <input id="dk" readOnly className={BOX + " w-[141px]"} />
          <label htmlFor="sn" className="ml-[17px] w-[116px]">Số ngày được nợ</label>
          <input id="sn" readOnly className={BOX + " w-[126px]"} />
        </div>

        <div className="flex h-[50px] items-end justify-between">
          <div className="flex">
            <Tab active mark="1" className="w-[109px]">. Hàng tiền</Tab>
            <Tab mark="2" className="w-[79px]">. Thuế</Tab>
            <Tab mark="3" className="w-[95px]">. Giá vốn</Tab>
            <Tab mark="4" className="w-[106px]">. Thống kê</Tab>
            <span className="w-[80px] border-t border-r border-[#86abd9]" />
          </div>
          <div className="flex items-center pb-[5px]">
            <label htmlFor="lt" className="w-[68px]">Loại tiền</label>
            <input id="lt" readOnly value="VND" className={BOX + " w-[73px]"} />
            <label htmlFor="tg" className="w-[67px] pl-[10px]">Tỷ giá</label>
            <input id="tg" readOnly value="1,00" className={BOX + " w-[100px] !px-[3px] text-right"} />
          </div>
        </div>

        <ItemGrid />

        <div className="flex pt-3 pb-[10px]">
          <div className="flex w-[150px] flex-col gap-2">
            <button type="button" disabled className="h-7 border border-[#92b2dc] text-[#8492a6]">Phân bổ chiết khấu...</button>
            <button type="button" className="h-7 border border-[#92b2dc] bg-[#adc7e6] text-black">Xem công nợ</button>
          </div>
          <dl className="ml-[238px] w-[263px] pt-1 leading-[29px]">
            <div className="flex justify-between"><dt className={BOLD}>Tổng tiền hàng</dt><dd>189.618.800</dd></div>
            <div className="flex justify-between"><dt className={BOLD}>Tiền chiết khấu</dt><dd>0</dd></div>
          </dl>
          <dl className="ml-[179px] w-[296px] pt-1 leading-[29px]">
            <div className="flex justify-between"><dt className={BOLD}>Tiền thuế GTGT</dt><dd>18.961.880</dd></div>
            <div className="flex justify-between"><dt className={BOLD}>Tổng tiền thanh toán</dt><dd>208.580.680</dd></div>
          </dl>
        </div>
      </div>

      <footer className="flex h-[29px] shrink-0 items-center justify-between bg-[#adc7e6] pr-[1px] pl-[5px]">
        F6 - chọn mã quy cách, Ctrl+F2 - Xem số tồn
        <svg viewBox="0 0 14 14" className="h-[14px] w-[14px] self-end fill-[#4a6a9c]">
          <path d="M11 1h2v2h-2zM6 6h2v2H6zM11 6h2v2h-2zM1 11h2v2H1zM6 11h2v2H6zM11 11h2v2h-2z" />
        </svg>
      </footer>
    </section>
  );
}

function ErrorDialog() {
  return (
    <div role="alertdialog" aria-labelledby="dlg-title" className={"absolute top-[396px] left-[717px] flex h-[241px] w-[495px] flex-col border border-[#6e6e6e] bg-white text-[14px] text-black shadow-[0_8px_20px_rgba(0,0,0,0.4)] " + UI}>
      <header className="flex h-[32px] items-center justify-between pr-[15px] pl-1">
        <h2 id="dlg-title">MISA SME.NET 2017</h2>
        <button type="button" aria-label="Đóng thông báo"><svg viewBox="0 0 12 12" className="h-3 w-3"><path d="M0 0l12 12M12 0L0 12" stroke="#111" strokeWidth="1.200" /></svg></button>
      </header>
      <div className="flex flex-1 pt-[29px] pl-[26px]">
        <svg viewBox="0 0 40 42" className="h-[42px] w-[40px] shrink-0">
          <path d="M20 1l19 39.500H1z" fill="#ffe100" stroke="#fbc11a" strokeWidth="1.600" strokeLinejoin="round" />
          <path d="M18.600 16h2.800l-.4 15h-2z" fill="#111" />
          <circle cx="20" cy="35" r="1.700" fill="#111" />
        </svg>
        <p className="ml-[11px] pt-[2px] leading-4">
          Lỗi Ghi sổ chứng từ:<br />
          Không thể xuất vật tư, hàng hóa &lt;26 121 - Mảnh dao JTGR<br />
          3100F SH725&gt; quá số lượng tồn trong kho &lt;HANGHOA -<br />
          KHO HÀNG HÓA&gt;. Số lượng tồn trong kho &lt;HANGHOA -<br />
          KHO HÀNG HÓA&gt; là: 20,00.<br />
          Ghi sổ không thành công.
        </p>
      </div>
      <footer className="flex h-[53px] items-center justify-end bg-[#f0f0f0] pr-[19px]">
        <button type="button" className="h-[27px] w-[92px] border-2 border-[#0078d7] bg-[#e1e1e1]">OK</button>
      </footer>
    </div>
  );
}

function Sidebar() {
  return (
    <aside className="flex w-[219px] shrink-0 flex-col border border-[#86abd9]">
      <div className="flex h-[30px] shrink-0 items-center justify-between pr-2 pl-2">
        <h2 className={"text-[20px] " + BOLD}>Bán hàng</h2>
        <svg viewBox="0 0 10 10" className="h-[10px] w-[10px]" fill="none" stroke="#3f6fb5" strokeWidth="1.300"><path d="M5 1L1 5l4 4M9.500 1l-4 4 4 4" /></svg>
      </div>
      <div className="relative min-h-0 flex-1 overflow-hidden border-t border-[#86abd9] bg-white">
        {links.map((group, g) => (
          <ul key={g} className={g ? "mt-[3px] ml-[3px] border-t-2 border-[#a3bfe2] pt-[2px]" : "ml-[3px]"}>
            {group.map((l) => (
              <li key={l}>
                <a href="#module" className={"flex h-[29px] items-center gap-[8px] whitespace-nowrap text-[14px] text-[#1c1c1c] " + GRID}><Doc />{l}</a>
              </li>
            ))}
          </ul>
        ))}
        <button type="button" aria-label="Cuộn xuống" className="absolute right-0 bottom-[2px] flex h-[21px] w-[21px] items-center justify-center border border-[#86abd9] bg-[#efefef]"><Tri /></button>
      </div>
      <div className="flex h-2 shrink-0 items-center justify-center border-t border-[#86abd9]">
        <span className="h-1 w-[44px] border-y-2 border-dotted border-[#7ea3d6]" />
      </div>
      {modules.map(([k, l]) => (
        <button key={k} type="button" className={"flex h-[40px] shrink-0 items-center gap-[5px] border-t border-[#86abd9] pl-[5px] text-[14px] font-bold text-[#111] " + UI + (k === "sell" ? " shadow-[inset_0_-2px_0_#f7a25c] bg-[#ffe59d]" : "")}>
          <ModuleIcon kind={k} className="h-[30px] w-[30px]" />{l}
        </button>
      ))}
      <div className="flex h-[37px] shrink-0 items-center gap-[5px] border-t border-[#86abd9] pl-[21px]">
        {["desk", "book", "list", "chart", "coins", "transfer", "scroll"].map((k) => (
          <button key={k} type="button" aria-label={k}><ModuleIcon kind={k} className="h-5 w-5" /></button>
        ))}
        <svg viewBox="0 0 10 18" className="ml-1 h-[18px] w-[10px]"><path d="M1 1l3 3-3 3M5 1l3 3-3 3" fill="none" stroke="#000" strokeWidth="1.800" /><path d="M1 12h8l-4 4.500z" /></svg>
      </div>
    </aside>
  );
}

const Cell = ({ className = "", children }) => (
  <div className={"flex h-[27px] items-center overflow-hidden border border-[#86abd9] pt-px whitespace-nowrap " + className}>{children}</div>
);

const taskApps = [
  ["Start", <svg viewBox="0 0 20 20" className="h-5 w-5 fill-white"><path d="M0 3l8.500-1.200v7.700H0zM9.500 1.600L20 0v9.500H9.500zM0 10.500h8.500v7.700L0 17zM9.500 10.500H20V20L9.500 18.400z" /></svg>],
  ["Tìm kiếm", <svg viewBox="0 0 20 20" className="h-5 w-5" fill="none" stroke="#fff" strokeWidth="1.500"><circle cx="12.500" cy="7.500" r="6.500" /><path d="M8 12.500L1 19.500" /></svg>],
  ["Task view", <svg viewBox="0 0 20 20" className="h-5 w-5" fill="none" stroke="#fff" strokeWidth="1.400"><path d="M1 0v3.500h12V0M1 6.500h12v7H1zM1 20v-3.500h12V20M17.500 0v4M17.500 10v10" /><path d="M17.500 5.500v3" strokeWidth="3" /></svg>],
  ["Edge", <svg viewBox="0 0 20 20" className="h-5 w-5"><path d="M1 9C2 3 6 0 10.500 0 16 0 19 4 19 9v2.500H7c.2 3 2.500 4.700 6 4.700 2 0 3.700-.6 5-1.300v3.700c-1.600.9-3.500 1.400-6 1.400-6 0-9.300-3.500-9.300-8 0-3 1.600-5.600 4.500-6.900C4 5.500 2 7 1 9zm6-1.200h6.600c0-2-1-3.700-3.200-3.700C8.500 4.100 7.200 5.600 7 7.800z" fill="#0a7bd6" /></svg>],
  ["Store", <svg viewBox="0 0 20 20" className="h-5 w-5"><path d="M6 5V3c0-3 8-3 8 0v2" fill="none" stroke="#fff" strokeWidth="1.400" /><path d="M1 5h18v14H1z" fill="#fff" /><path d="M6 8h3.500v3.500H6z" fill="#f25022" /><path d="M10.500 8H14v3.500h-3.500z" fill="#7fba00" /><path d="M6 12.500h3.500V16H6z" fill="#00a4ef" /><path d="M10.500 12.500H14V16h-3.500z" fill="#ffb900" /></svg>],
  ["Mail", <svg viewBox="0 0 20 20" className="h-5 w-5"><path d="M0 7l10-7 10 7v13H0z" fill="#0f6cbf" /><path d="M2 7h16v8H2z" fill="#eaf5fd" /><path d="M0 7l10 7 10-7v13H0z" fill="#3fa9ea" /><path d="M0 20l10-7 10 7z" fill="#6bc3f4" /></svg>],
  ["Explorer", <svg viewBox="0 0 20 20" className="h-5 w-5"><path d="M0 2h7l2 2h11v13H0z" fill="#f5c451" /><path d="M1 6h19v11H1z" fill="#fde08a" /><path d="M4 18v-7h12v7h-3v-4H7v4z" fill="#2e9be6" /></svg>, 1],
  ["Notes", <svg viewBox="0 0 20 20" className="h-5 w-5"><path d="M2 1h17v18H2z" fill="#ffdf00" /><path d="M9 19v-8h10v8z" fill="#1c1a10" /><path d="M11 12h7l-7 6z" fill="#ffdf00" /></svg>, 1],
  ["Zalo", <span className="flex h-[21px] w-[21px] items-center justify-center rounded-[7px] bg-white text-[8px] font-bold text-[#0a68ff]">Zalo</span>, 1],
  ["Chrome", <svg viewBox="0 0 20 20" className="h-5 w-5"><circle cx="10" cy="10" r="9.500" fill="#f2c21b" /><path d="M10 10L1.800 5.200A9.500 9.500 0 0 1 18.300 5.500H10z" fill="#df4234" /><path d="M10 10l4 2-4.600 7.500A9.500 9.500 0 0 1 1.800 5.200z" fill="#2ba24c" /><circle cx="10" cy="10" r="4.800" fill="#fff" /><circle cx="10" cy="10" r="3.700" fill="#3f7ee8" /></svg>, 1],
  ["MISA SME.NET", <MisaLogo ring="#3d4148" className="h-[21px] w-[21px]" />, 2],
];

function Taskbar() {
  return (
    <footer className={"flex h-[38px] shrink-0 items-stretch bg-[#070c14] text-[14px] text-white " + UI}>
      {taskApps.map(([n, icon, st]) => (
        <button key={n} type="button" aria-label={n} className={"flex w-[46px] flex-col items-center " + (st === 2 ? "bg-[#3d4148]" : "")}>
          <span className="flex flex-1 items-center pt-px">{icon}</span>
          <span className={"h-[3px] " + (st === 2 ? "w-full bg-[#76b9ed]" : st ? "w-[35px] bg-[#76b9ed]" : "w-0")} />
        </button>
      ))}
      <div className="ml-auto flex items-center pr-[31px]">
        <svg viewBox="0 0 20 20" className="mr-[20px] h-5 w-5" fill="none" stroke="#fff" strokeWidth="1.400"><circle cx="7" cy="9.500" r="3" /><path d="M1.500 19c0-8 11-8 11 0" /><circle cx="14" cy="4" r="3" /><path d="M12 8c3-1 6.500.5 6.500 5" /></svg>
        <svg viewBox="0 0 16 10" className="mr-[13px] h-[10px] w-4" fill="none" stroke="#fff" strokeWidth="1.400"><path d="M1 9l7-7 7 7" /></svg>
        <svg viewBox="0 0 20 14" className="mr-[11px] h-[14px] w-5" fill="none" stroke="#fff" strokeWidth="1.200"><path d="M7 2.500h11v9H4V8" /><path d="M18.500 5.500v3" strokeWidth="2" /><path d="M7.500 4.500h9v5.500h-9z" fill="#fff" stroke="none" /><path d="M1.500 0v2M4.500 0v2M.500 2.500h5c0 4-5 4-5 0M3 5.500v3" /></svg>
        <svg viewBox="0 0 18 18" className="mr-[12px] h-[16px] w-[16px]" fill="none" stroke="#8d939b" strokeWidth="1.400"><path d="M1 17C1 8 8 2 17 2M5 17C5 11 10 6 17 6M9 17c0-4 4-7 8-7" /><path d="M12 17c0-2 2-4 4-4" stroke="#fff" /><circle cx="15.500" cy="16" r="1.500" fill="#fff" stroke="none" /></svg>
        <svg viewBox="0 0 20 16" className="mr-[13px] h-4 w-5" fill="none" stroke="#fff" strokeWidth="1.300"><path d="M1 5h3l4-4v14l-4-4H1zM12 5l6 6M18 5l-6 6" /></svg>
        <span className="mr-[20px]">ENG</span>
        <span className="mr-[29px]">4:00 PM</span>
        <svg viewBox="0 0 20 20" className="h-5 w-5" fill="none" stroke="#fff" strokeWidth="1.400"><path d="M1 1h18v15h-6l-3 3-3-3H1z" /></svg>
      </div>
    </footer>
  );
}

export default function App() {
  return (
    <div className={"relative flex h-screen w-full flex-col overflow-hidden bg-[#cbdbf0] text-[14px] " + UI}>
      <header className="flex h-7 shrink-0 items-center bg-[#6596c9] text-white">
        <MisaLogo className="h-[21px] w-[21px]" />
        <h1 className="ml-[7px] flex-1">MISA SME.NET 2017 R45 Professional - CÔNG TY TNHH MISS ME</h1>
        <button type="button" className="mr-[7px] flex h-[25px] w-[148px] items-center gap-2 self-start bg-[#3c9dff] pb-[2px] pl-[5px] font-bold">
          <svg viewBox="0 0 20 20" className="h-5 w-5"><path d="M10 0c5.500 0 10 4 10 9s-4.500 9-10 9l-3-.5L4 20v-4C1.500 14.500 0 12 0 9c0-5 4.500-9 10-9z" fill="#fff" /><path d="M4 11.500L9 6.500l2.500 2.500 4.500-2.500-5 5-2.500-2.500z" fill="#3c9dff" /></svg>
          Tư vấn sử dụng
        </button>
        <button type="button" className="mr-[8px] flex h-[25px] w-[148px] items-center gap-1 self-start bg-[#ff9330] pb-[2px] pl-1 font-bold whitespace-nowrap">
          <svg viewBox="0 0 20 20" className="h-5 w-5 shrink-0" fill="none" stroke="#fff" strokeWidth="1.200"><circle cx="10" cy="10" r="9.200" fill="#f0722a" stroke="#ffe3c6" /><path d="M4 5.500h2l2 7.500h6.500M6.800 7h9l-1.500 4.500H7.700M9.500 7v4.500M12 7v4.500M6.500 9.200h9" /><circle cx="9" cy="15" r=".8" /><circle cx="13.500" cy="15" r=".8" /></svg>
          Gia hạn cập nhật
        </button>
        <div className="flex items-center gap-[15px] pr-[8px]">
          <button type="button" aria-label="Thu nhỏ ứng dụng" className="h-[3px] w-[9px] bg-black" />
          <button type="button" aria-label="Khôi phục"><svg viewBox="0 0 14 13" className="h-[13px] w-[14px]" fill="none" stroke="#000" strokeWidth="1.300"><path d="M4.500 4V1h9v7H10M1 5h8.500v7H1z" /><path d="M4.500 1.500h9M1 5.500h8.500" strokeWidth="2" /></svg></button>
          <button type="button" aria-label="Thoát"><svg viewBox="0 0 10 10" className="h-[10px] w-[10px]"><path d="M1 1l8 8M9 1L1 9" stroke="#000" strokeWidth="2.600" /></svg></button>
        </div>
      </header>

      <nav className="flex h-7 shrink-0 items-center gap-[15px] bg-[#adc7e6] pr-[2px] pb-px pl-[6px] text-[#23324a]">
        <span className="h-5 w-[5px] border-x-2 border-dotted border-[#92acd0]" />
        {["Tệp", "Danh mục", "Nghiệp vụ", "Hệ thống", "Tiện ích", "Trợ giúp"].map((m) => <button key={m} type="button" className="whitespace-nowrap first-of-type:-ml-[5px]">{m}</button>)}
        <b className="ml-[24px] text-black">Đang làm việc trên:</b>
        <b className="-ml-[6px] text-black">CÔNG TY TNHH JISU</b>
        <button type="button" className="ml-auto flex items-center gap-[5px] pt-[3px]">
          <svg viewBox="0 0 20 20" className="h-5 w-5"><circle cx="10" cy="10" r="9.500" fill="#1b83e6" /><ellipse cx="9" cy="5.500" rx="6" ry="4" fill="#8fd6fa" /><path d="M8 5l6 1 1 6-5 4-3-4z" fill="#0d5cb8" /></svg>
          <span className="-ml-[2px]">Thông báo</span>
          <svg viewBox="0 0 7 5" className="ml-[26px] h-[5px] w-[7px] fill-black"><path d="M0 0h7L3.500 4.500z" /></svg>
        </button>
      </nav>
      <div className="flex h-[29px] shrink-0 items-center bg-[#adc7e6] pb-px pl-[6px] text-[#23324a]">
        <span className="h-5 w-[5px] border-x-2 border-dotted border-[#92acd0]" />
        <button type="button" className="ml-[10px] flex items-center gap-[16px]">
          <svg viewBox="0 0 16 20" className="h-5 w-4"><path d="M.6.6H12l3.400 3.400v15.400H.6z" fill="#e9f5fe" stroke="#4a9fdc" strokeWidth="1.200" /><path d="M3 6h2M3 9h2M3 12h2M3 15h2M7 6h6M7 9h6M7 12h6M7 15h6" stroke="#2f8bd0" strokeWidth="1.600" /></svg>
          Chọn chi nhánh làm việc
        </button>
        <button type="button" className="ml-[16px] flex items-center gap-[9px]">
          <svg viewBox="0 0 20 20" className="h-5 w-5"><path d="M13 13l5 5.500" stroke="#8c86c9" strokeWidth="3.500" strokeLinecap="round" /><circle cx="8" cy="8" r="7" fill="#cdeafc" stroke="#5fa9dc" strokeWidth="1.400" /><ellipse cx="6.500" cy="5.500" rx="3" ry="2" fill="#fff" /></svg>
          Tìm kiếm
        </button>
      </div>

      <main className="flex min-h-0 flex-1 pt-1 pb-[5px] pl-1">
        <Sidebar />
        <div className={"ml-1 flex min-w-0 flex-1 flex-col pr-[2px] text-[#23324a] " + GRID}>
          <div className="flex h-[34px] shrink-0 items-end justify-between border-b border-[#86abd9] pl-[9px]">
            <span className="self-center pt-1">Báo giá</span>
            <button type="button" aria-label="Tùy chọn" className="mr-[2px] flex h-[30px] w-[46px] items-center justify-center gap-2 border border-[#86abd9]">
              <svg viewBox="0 0 20 20" className="h-5 w-5"><path d="M8.500 1h3l.5 2.500 2 .8 2-1.300 2 2-1.300 2 .8 2 2.500.5v3l-2.500.5-.8 2 1.300 2-2 2-2-1.300-2 .8-.5 2.500h-3L8 17.500l-2-.8L4 18l-2-2 1.300-2-.8-2L0 11.500v-3L2.500 8l.8-2L2 4l2-2 2 1.300 2-.8z" fill="#c9ccc4" stroke="#75776f" strokeWidth=".8" /><circle cx="10" cy="10" r="3.500" fill="#cbdbf0" stroke="#75776f" /><path d="M1 10c0 6 4 8 9 7.500v2.500l4.500-4-4.500-3.500v2.300C7 15 4.500 13.500 4 10z" fill="#54c92c" stroke="#2f8f14" strokeWidth=".6" /></svg>
              <svg viewBox="0 0 7 5" className="h-[5px] w-[7px] fill-[#2f5fae]"><path d="M0 0h7L3.500 4.500z" /></svg>
            </button>
          </div>
          <div className="flex h-[50px] shrink-0 items-center pb-[2px] pl-[12px]">
            <label htmlFor="ky" className="w-[32px]">Kỳ</label>
            <input id="ky" defaultValue="Đầu tháng đến hiện tại" className={BOX + " w-[200px] !bg-white"} />
          </div>
          <VoucherGrid />
          <div className="mt-2 flex h-[25px] shrink-0">
            <button type="button" className={"w-[75px] border border-b-0 border-[#86abd9] bg-[#ffe59d] pb-px " + BOLD}>Chi tiết</button>
            <span className="flex-1 border-b border-[#86abd9]" />
          </div>
          <DetailGrid />
        </div>
      </main>

      <footer className={"flex h-7 shrink-0 items-center gap-[3px] bg-[#adc7e6] px-[3px] text-[14px] text-[#23324a] " + GRID}>
        <Cell className="w-[325px] gap-[6px] pl-[2px]">
          <svg viewBox="0 0 16 20" className="h-5 w-4"><path d="M3 3l8-2 4 2v13l-9 3-3-2z" fill="#8f98d2" stroke="#5d649f" /><path d="M5 6l8-2M5 9l8-2" stroke="#dfe3fa" /><circle cx="6" cy="14" r="5.500" fill="#2fae3d" /><path d="M3.500 14l2 2.200 3.500-4" fill="none" stroke="#fff" strokeWidth="1.500" /></svg>
          Máy chủ: DESKTOP-L1MJQE1\MISASME2017
        </Cell>
        <Cell className="w-[163px] gap-[5px] pl-[2px]">
          <svg viewBox="0 0 16 20" className="h-5 w-4"><path d="M1 3c0-3 14-3 14 0v13c0 4-14 4-14 0z" fill="#f0c53a" stroke="#b88a12" /><ellipse cx="8" cy="3.200" rx="6.500" ry="2" fill="#fbe88f" /></svg>
          Tên DLKT: JISU2020
        </Cell>
        <Cell className="w-[147px] gap-[3px] pl-[2px]">
          <svg viewBox="0 0 16 20" className="h-5 w-4"><circle cx="9.500" cy="5" r="4" fill="#f4c63c" stroke="#5a4310" strokeWidth=".8" /><path d="M1 19c-1-6 3-9 8-9s7 4 6 9z" fill="#4aa3e2" stroke="#1f6db0" /><path d="M7 10l2 4 2-4z" fill="#fff" /></svg>
          Người dùng: Admin
        </Cell>
        <Cell className="w-[13px]" />
        <Cell className="flex-1" />
        <Cell className="w-[185px] pl-[2px] font-['Liberation_Sans',sans-serif] font-bold text-black">Tổng đài tư vấn: 1900 8677</Cell>
        <Cell className="w-[38px] justify-center">OVR</Cell>
        <Cell className="w-[40px] justify-center">NUM</Cell>
        <Cell className="w-[46px]" />
        <Cell className="w-[45px]" />
        <Cell className="w-[67px] pl-[4px]">4:00 CH</Cell>
        <Cell className="w-[76px] justify-center">04/04/2020</Cell>
      </footer>

      <Taskbar />
      <InvoiceWindow />
      <ErrorDialog />
    </div>
  );
}
